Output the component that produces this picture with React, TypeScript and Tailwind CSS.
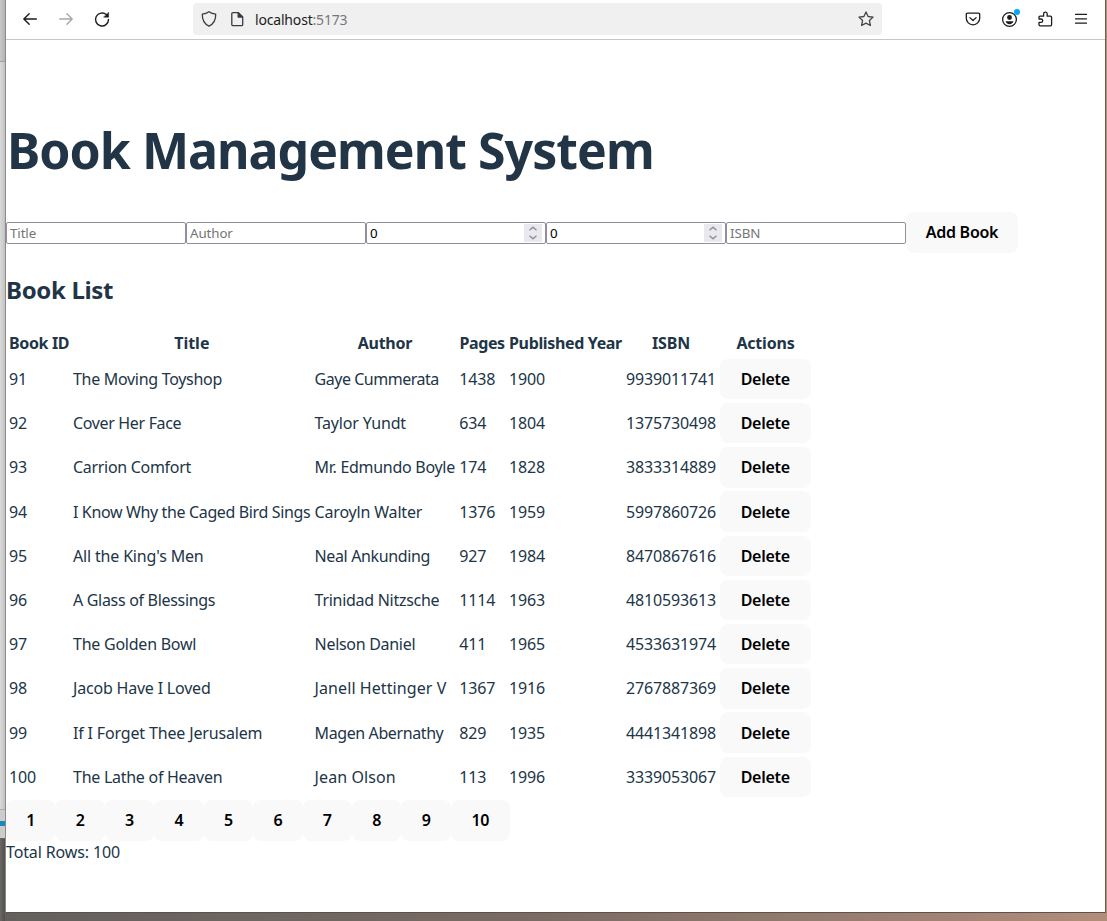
import type { ReactNode } from "react";

interface Book {
  id: string;
  title: string;
  titleTracking: string;
  author: string;
  authorTracking: string;
  pages: string;
  year: string;
  isbn: string;
}

const books: Book[] = [
  { id: "91", title: "The Moving Toyshop", titleTracking: "tracking-[-0.3px]", author: "Gaye Cummerata", authorTracking: "tracking-[-0.48px]", pages: "1438", year: "1900", isbn: "9939011741" },
  { id: "92", title: "Cover Her Face", titleTracking: "tracking-[-0.34px]", author: "Taylor Yundt", authorTracking: "tracking-[-0.16px]", pages: "634", year: "1804", isbn: "1375730498" },
  { id: "93", title: "Carrion Comfort", titleTracking: "tracking-[-0.3px]", author: "Mr. Edmundo Boyle", authorTracking: "tracking-[-0.29px]", pages: "174", year: "1828", isbn: "3833314889" },
  { id: "94", title: "I Know Why the Caged Bird Sings", titleTracking: "tracking-[-0.36px]", author: "Caroyln Walter", authorTracking: "tracking-[-0.18px]", pages: "1376", year: "1959", isbn: "5997860726" },
  { id: "95", title: "All the King's Men", titleTracking: "tracking-[-0.17px]", author: "Neal Ankunding", authorTracking: "tracking-[-0.38px]", pages: "927", year: "1984", isbn: "8470867616" },
  { id: "96", title: "A Glass of Blessings", titleTracking: "tracking-[-0.31px]", author: "Trinidad Nitzsche", authorTracking: "tracking-[-0.28px]", pages: "1114", year: "1963", isbn: "4810593613" },
  { id: "97", title: "The Golden Bowl", titleTracking: "tracking-[-0.24px]", author: "Nelson Daniel", authorTracking: "tracking-[-0.3px]", pages: "411", year: "1965", isbn: "4533631974" },
  { id: "98", title: "Jacob Have I Loved", titleTracking: "tracking-[-0.2px]", author: "Janell Hettinger V", authorTracking: "tracking-[0.08px]", pages: "1367", year: "1916", isbn: "2767887369" },
  { id: "99", title: "If I Forget Thee Jerusalem", titleTracking: "tracking-[-0.16px]", author: "Magen Abernathy", authorTracking: "tracking-[-0.4px]", pages: "829", year: "1935", isbn: "4441341898" },
  { id: "100", title: "The Lathe of Heaven", titleTracking: "tracking-[-0.27px]", author: "Jean Olson", authorTracking: "tracking-[0.08px]", pages: "113", year: "1996", isbn: "3339053067" },
];

const columns = ["w-[64px]", "w-[241.6px]", "w-[144.7px]", "w-[49.6px]", "w-[117.2px]", "w-[93.9px]"];
const headings = [
  { label: "Book ID", tracking: "tracking-[-0.36px]" },
  { label: "Title", tracking: "tracking-normal" },
  { label: "Author", tracking: "tracking-[-0.3px]" },
  { label: "Pages", tracking: "tracking-[-0.4px]" },
  { label: "Published Year", tracking: "tracking-[-0.35px]" },
  { label: "ISBN", tracking: "tracking-[-0.2px]" },
];

function Icon({ className = "", children }: { className?: string; children: ReactNode }) {
  return (
    <svg
      className={`size-4 shrink-0 overflow-visible ${className}`}
      viewBox="0 0 16 16"
      fill="none"
      stroke="currentColor"
      strokeWidth="1.3"
      strokeLinecap="round"
      strokeLinejoin="round"
    >
      {children}
    </svg>
  );
}

function Toolbar() {
  return (
    <header className="flex h-10 shrink-0 items-start border-b border-[#c6c6c6] text-[#1c1c20]">
      <div className="flex w-[187px] gap-5 pt-[11px] pl-4">
        <Icon>
          <path d="M14.3 8H1.8M7.200 2.800 1.900 8l5.300 5.200" strokeWidth="1.400" />
        </Icon>
        <Icon className="text-[#a8a8aa]">
          <path d="M1.7 8h12.500M8.900 2.800 14.200 8l-5.300 5.200" strokeWidth="1.400" />
        </Icon>
        <Icon>
          <path d="M12.300 3.600A6.500 6.500 0 1 0 14.500 8.500" strokeWidth="1.400" />
          <path d="M14.600 1.500v4.700H9.900z" fill="currentColor" strokeWidth="0.5" />
        </Icon>
      </div>
      <div className="mt-[3px] flex h-8 w-[689px] items-center rounded-[4px] bg-[#f0f0f1] pl-2 pr-2">
        <Icon className="text-[#3b3b40]">
          <path d="M8 .7c2.200 1.600 4.400 2.200 6.700 2.400.2 5.400-1.800 9.800-6.700 12.100C3.100 12.900 1.100 8.500 1.300 3.100 3.600 2.900 5.800 2.300 8 .7z" />
        </Icon>
        <Icon className="ml-3 text-[#3b3b40]">
          <path d="M4 1.600h5.300l4.400 4.400v7.400a1.200 1.200 0 0 1-1.200 1.200H4a1.200 1.200 0 0 1-1.200-1.200V2.800A1.200 1.200 0 0 1 4 1.600z" />
          <path d="M9.200 1.700v4.300h4.300z" fill="currentColor" />
        </Icon>
        <span className="ml-[10px] whitespace-nowrap pt-px text-[14px] tracking-[-0.18px] text-[#1c1c20]">
          localhost<span className="text-[#77777b]">:5173</span>
        </span>
        <Icon className="ml-auto text-[#45454a]">
          <path d="m8 .9 2.100 4.600 5 .6-3.700 3.400 1 5L8 12.100l-4.400 2.400 1-5L.9 6.100l5-.6z" />
        </Icon>
      </div>
      <div className="ml-[83px] flex gap-5 pt-[11px]">
        <Icon>
          <path d="M2.500 2.200h11a1.200 1.200 0 0 1 1.200 1.200v3.900a6.700 6.500 0 0 1-13.400 0V3.400a1.200 1.200 0 0 1 1.200-1.200z" />
          <path d="m4.900 6.600 3.100 2.900 3.100-2.900" />
        </Icon>
        <Icon>
          <circle cx="8.500" cy="8.500" r="6.900" />
          <circle cx="8.500" cy="6.500" r="2.400" fill="currentColor" stroke="none" />
          <path d="M4.600 10.300h7.800c-.3 1.700-1.900 2.900-3.900 2.900s-3.600-1.200-3.900-2.900z" fill="currentColor" stroke="none" />
          <circle cx="16" cy="1" r="3" fill="#00a9fa" stroke="none" />
        </Icon>
        <Icon>
          <path d="M3 5.200h3.600V2.900a1.800 1.800 0 0 1 3.600 0v2.300h3.200a1.200 1.200 0 0 1 1.200 1.200v7.200a1.200 1.200 0 0 1-1.200 1.200H3.200a1.200 1.200 0 0 1-1.200-1.200v-2.200h2a1.700 1.700 0 0 0 0-3.400H2V6.200a1 1 0 0 1 1-1z" />
        </Icon>
        <Icon>
          <path d="M2.500 3.400h11M2.500 7.800h11M2.500 12.200h11" strokeWidth="1.200" />
        </Icon>
      </div>
    </header>
  );
}

function Field({ text, numeric = false }: { text: string; numeric?: boolean }) {
  return (
    <div
      className={`flex h-[22px] w-[180px] items-center justify-between rounded-[2px] border border-[#8f8f9d] pl-[3px] pr-[3px] text-[13.333px] leading-none tracking-[-0.1px] ${
        numeric ? "text-black" : "text-[#757575]"
      }`}
    >
      <span className="pt-px">{text}</span>
      {numeric && (
        <svg className="h-[18px] w-[18px] bg-[#e9e9ed]" viewBox="0 0 18 18" fill="none" stroke="#8f8f9d" strokeWidth="1.500">
          <path d="M5.500 6.300 9 3.300l3.500 3M5.500 11.700l3.500 3 3.500-3" />
        </svg>
      )}
    </div>
  );
}

function Button({ className, children }: { className: string; children: ReactNode }) {
  return (
    <button
      className={`flex shrink-0 items-center justify-center whitespace-nowrap rounded-[8px] bg-[#f9f9f9] font-semibold tracking-[-0.27px] text-black ${className}`}
    >
      {children}
    </button>
  );
}

export default function App() {
  return (
    <div className="flex h-[921px] w-[1107px] overflow-hidden bg-linear-to-r from-[#62605d] via-[#7b6c64] to-[#b28d7a] font-['Noto_Sans','Open_Sans',sans-serif]">
      <div className="flex w-[5px] shrink-0 flex-col bg-linear-to-r from-[#6b6865] to-[#51504f]">
        <div className="h-[62px] border-b border-[#a2a2a2] bg-linear-to-r from-[#c9c9c9] to-[#b2b2b2]" />
        <div className="h-[748px] border-b border-[#adadad] bg-linear-to-r from-[#dadada] to-[#c2c2c2]" />
        <div className="h-[11px] bg-[#cccccc]" />
        <div className="h-[5px] bg-[#1d86bd]" />
        <div className="h-[13px] border-b border-[#666] bg-[#cccccc]" />
      </div>
      <main className="flex h-[913px] w-[1101px] shrink-0 flex-col border-b border-l border-r border-b-[#5d514b] border-l-[#8b8b8b] border-r-[#735e53] bg-white text-[16px] text-[#213547]">
        <Toolbar />
        <h1 className="mt-[70px] h-20 whitespace-nowrap pl-px text-[50px] font-bold leading-[80px] tracking-[-0.97px]">
          Book Management System
        </h1>
        <form className="mt-[22px] flex h-[42px] items-center">
          <Field text="Title" />
          <Field text="Author" />
          <Field text="0" numeric />
          <Field text="0" numeric />
          <Field text="ISBN" />
          <Button className="mb-[2px] h-[41px] w-[112px]">Add Book</Button>
        </form>
        <h2 className="mt-[18px] h-9 whitespace-nowrap text-[24px] font-bold leading-9 tracking-[-0.33px]">Book List</h2>
        <table className="mt-[21px] block pl-[3px]">
          <thead className="block">
            <tr className="flex h-[28px] items-center">
              {headings.map(({ label, tracking }, i) => (
                <th key={label} className={`${columns[i]} ${tracking} shrink-0 whitespace-nowrap pr-[4px] text-center font-bold`}>
                  {label}
                </th>
              ))}
              <th className="w-[91px] font-bold tracking-[-0.2px]">Actions</th>
            </tr>
          </thead>
          <tbody className="block">
            {books.map((book) => (
              <tr key={book.id} className="flex h-[44.2px] items-center whitespace-nowrap tracking-[-0.15px]">
                <td className={`${columns[0]} shrink-0`}>{book.id}</td>
                <td className={`${columns[1]} ${book.titleTracking} shrink-0`}>{book.title}</td>
                <td className={`${columns[2]} ${book.authorTracking} shrink-0`}>{book.author}</td>
                <td className={`${columns[3]} shrink-0`}>{book.pages}</td>
                <td className={`${columns[4]} shrink-0`}>{book.year}</td>
                <td className={`${columns[5]} shrink-0`}>{book.isbn}</td>
                <td>
                  <Button className="h-[40.400px] w-[90.600px]">Delete</Button>
                </td>
              </tr>
            ))}
          </tbody>
        </table>
        <nav className="mt-px flex">
          {["1", "2", "3", "4", "5", "6", "7", "8", "9"].map((page) => (
            <Button key={page} className="h-[41px] w-[49.430px]">
              {page}
            </Button>
          ))}
          <Button className="h-[41px] w-[59px]">10</Button>
        </nav>
        <p className="-mt-px leading-6 tracking-[-0.13px]">Total Rows: 100</p>
      </main>
    </div>
  );
}
